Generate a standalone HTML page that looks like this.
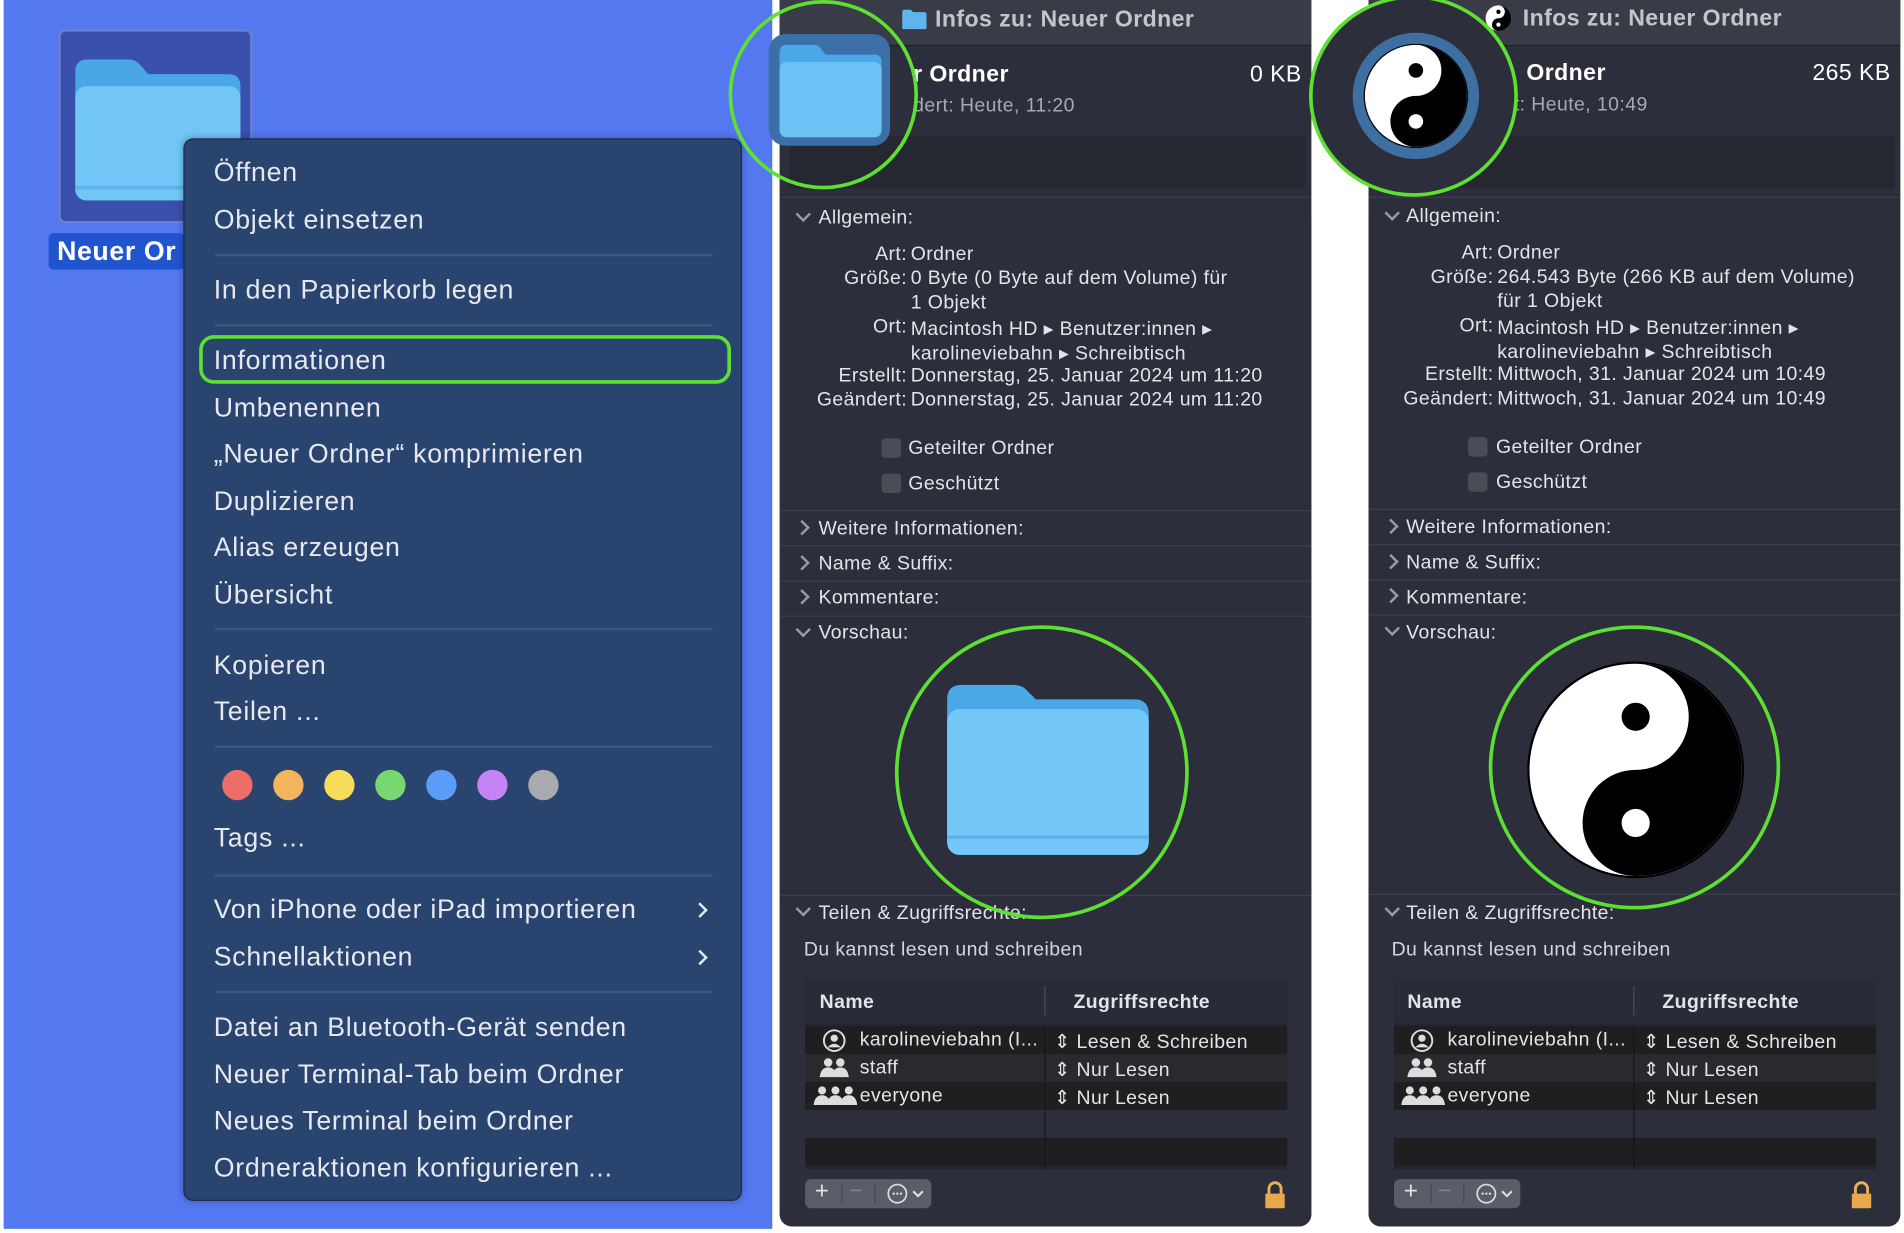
<!DOCTYPE html>
<html><head><meta charset="utf-8">
<style>
html,body{margin:0;padding:0;background:#fff;overflow:hidden;width:1904px;height:1232px}
#s{position:absolute;left:0;top:0;width:1568px;height:1015px;transform:scale(1.2143);transform-origin:0 0;font-family:"Liberation Sans",sans-serif}
.a{position:absolute;white-space:nowrap}
.bg{position:absolute;left:3px;top:0;width:633px;height:1012px;background:#5478f0}
.menu{position:absolute;left:151px;top:114px;width:458px;height:873px;background:#2a4470;border:1px solid #1c2a48;border-radius:8px;box-shadow:0 0 6px rgba(0,0,0,.3)}
.mi{position:absolute;left:24px;color:#e6e8ee;font-size:22px;letter-spacing:0.6px}
.sep{position:absolute;left:25px;width:410px;height:2px;background:#3d5680}
.dot{position:absolute;top:519px;width:25px;height:25px;border-radius:50%}
.panel{position:absolute;top:0;width:438px;height:1010px;background:#2c2f3b;border-radius:0 0 10px 10px;overflow:hidden;color:#e4e4e8;font-size:16px;letter-spacing:0.35px}
.tb{position:absolute;left:0;top:0;width:100%;height:37px;background:#393c47;border-bottom:1px solid #1e2028}
.hl{position:absolute;left:0;width:100%;height:1px;background:#3c3f4b}
.chev{position:absolute;width:7px;height:7px;border-right:2px solid #9a9ca4;border-bottom:2px solid #9a9ca4}
.cd{transform:rotate(45deg)}
.cr{transform:rotate(-45deg)}
.cb{position:absolute;width:16px;height:16px;background:#4a4c56;border-radius:3px}
.lab{position:absolute;right:333px;text-align:right}
.val{position:absolute;left:108px}
.row{position:absolute;left:21px;width:397px;height:23px}
</style></head><body><div id="s">
<div class="bg"></div>
<div class="a" style="left:48px;top:24px;width:160px;height:160px;background:#3a50ad;border:2px solid #6a7fd0;border-radius:6px;box-sizing:border-box"></div>
<svg class="a" style="left:60px;top:45px" width="140" height="125" viewBox="0 0 140 125"><path d="M2 14 Q2 4 12 4 H46 Q52 4 56 9 L62 16 H128 Q138 16 138 26 V110 Q138 120 128 120 H12 Q2 120 2 110Z" fill="#4aa7e6"/><rect x="2" y="26" width="136" height="94" rx="9" fill="#72c6f6"/><rect x="2" y="108" width="136" height="3" fill="#5fb3ea"/></svg>
<div class="a" style="left:40px;top:192px;width:112px;height:30px;background:#2155cf;border-radius:4px"></div>
<div class="a" style="left:47px;top:194px;color:#fff;font-size:22px;font-weight:bold;letter-spacing:0.5px">Neuer Or</div>
<div class="menu">
<div class="mi" style="top:14px">Öffnen</div>
<div class="mi" style="top:53px">Objekt einsetzen</div>
<div class="sep" style="top:94px"></div>
<div class="mi" style="top:111px">In den Papierkorb legen</div>
<div class="sep" style="top:152px"></div>
<div class="a" style="left:12px;top:161px;width:438px;height:40px;border:3px solid #5ee033;border-radius:12px;box-sizing:border-box"></div>
<div class="mi" style="top:169px">Informationen</div>
<div class="mi" style="top:208px">Umbenennen</div>
<div class="mi" style="top:246px">„Neuer Ordner“ komprimieren</div>
<div class="mi" style="top:285px">Duplizieren</div>
<div class="mi" style="top:323px">Alias erzeugen</div>
<div class="mi" style="top:362px">Übersicht</div>
<div class="sep" style="top:402px"></div>
<div class="mi" style="top:420px">Kopieren</div>
<div class="mi" style="top:458px">Teilen ...</div>
<div class="sep" style="top:499px"></div>
<div class="dot" style="left:31px;background:#ec6e66"></div>
<div class="dot" style="left:73px;background:#f2b45c"></div>
<div class="dot" style="left:115px;background:#f7dc5a"></div>
<div class="dot" style="left:157px;background:#77d872"></div>
<div class="dot" style="left:199px;background:#5a9df6"></div>
<div class="dot" style="left:241px;background:#c583f3"></div>
<div class="dot" style="left:283px;background:#a9a9b0"></div>
<div class="mi" style="top:562px">Tags ...</div>
<div class="sep" style="top:605px"></div>
<div class="mi" style="top:621px">Von iPhone oder iPad importieren</div>
<div class="mi" style="top:660px">Schnellaktionen</div>
<div class="chev cr" style="left:420px;top:630px;border-color:#e6e8ee"></div>
<div class="chev cr" style="left:420px;top:669px;border-color:#e6e8ee"></div>
<div class="sep" style="top:701px"></div>
<div class="mi" style="top:718px">Datei an Bluetooth-Gerät senden</div>
<div class="mi" style="top:757px">Neuer Terminal-Tab beim Ordner</div>
<div class="mi" style="top:795px">Neues Terminal beim Ordner</div>
<div class="mi" style="top:834px">Ordneraktionen konfigurieren ...</div>
</div>

<div class="panel" style="left:642px">
<div class="tb"></div>
<svg class="a" style="left:100px;top:7px" width="22" height="18"><path d="M1 3 Q1 1 3 1 H8 L10 3 H19 Q21 3 21 5 V16 Q21 17 20 17 H2 Q1 17 1 16Z" fill="#5db4ef"/></svg>
<div class="a" style="left:128px;top:6px;font-size:19px;font-weight:bold;color:#c4c5ca">Infos zu: Neuer Ordner</div>
<div class="a" style="left:110px;top:51px;font-size:19px;font-weight:bold;color:#fff">r Ordner</div>
<div class="a" style="right:8px;top:51px;font-size:19px;color:#fff">0 KB</div>
<div class="a" style="left:110px;top:79px;color:#a8a9b0">dert: Heute, 11:20</div>
<div class="a" style="left:8px;top:112px;width:425px;height:43px;background:#252731"></div>
<div class="hl" style="top:162px"></div>
<div class="chev cd" style="left:15px;top:172px"></div>
<div class="a" style="left:32px;top:171px">Allgemein:</div>
<div class="lab" style="top:201px">Art:</div><div class="val" style="top:201px">Ordner</div>
<div class="lab" style="top:221px">Größe:</div><div class="val" style="top:221px">0 Byte (0 Byte auf dem Volume) für</div>
<div class="val" style="top:241px">1 Objekt</div>
<div class="lab" style="top:261px">Ort:</div><div class="val" style="top:261px">Macintosh HD ▸ Benutzer:innen ▸</div>
<div class="val" style="top:281px">karolineviebahn ▸ Schreibtisch</div>
<div class="lab" style="top:301px">Erstellt:</div><div class="val" style="top:301px">Donnerstag, 25. Januar 2024 um 11:20</div>
<div class="lab" style="top:321px">Geändert:</div><div class="val" style="top:321px">Donnerstag, 25. Januar 2024 um 11:20</div>
<div class="cb" style="left:84px;top:361px"></div><div class="a" style="left:106px;top:361px">Geteilter Ordner</div>
<div class="cb" style="left:84px;top:390px"></div><div class="a" style="left:106px;top:390px">Geschützt</div>
<div class="hl" style="top:420px"></div>
<div class="chev cr" style="left:14px;top:430px"></div><div class="a" style="left:32px;top:427px">Weitere Informationen:</div>
<div class="hl" style="top:449px"></div>
<div class="chev cr" style="left:14px;top:459px"></div><div class="a" style="left:32px;top:456px">Name &amp; Suffix:</div>
<div class="hl" style="top:478px"></div>
<div class="chev cr" style="left:14px;top:487px"></div><div class="a" style="left:32px;top:484px">Kommentare:</div>
<div class="hl" style="top:507px"></div>
<div class="chev cd" style="left:15px;top:514px"></div><div class="a" style="left:32px;top:513px">Vorschau:</div>
<svg class="a" style="left:134px;top:560px" width="174" height="148" viewBox="0 0 174 148"><path d="M4 16 Q4 4 16 4 H58 Q66 4 70 9 L77 16 H158 Q170 16 170 28 V132 Q170 144 158 144 H16 Q4 144 4 132Z" fill="#4aa8e8"/><rect x="4" y="24" width="166" height="120" rx="10" fill="#74c8f8"/><rect x="4" y="128" width="166" height="3" fill="#5cb2ec"/></svg>
<div class="hl" style="top:737px"></div>
<div class="chev cd" style="left:15px;top:744px"></div><div class="a" style="left:32px;top:744px">Teilen &amp; Zugriffsrechte:</div>
<div class="a" style="left:20px;top:774px;color:#d6d7dc">Du kannst lesen und schreiben</div>
<div class="a" style="left:21px;top:806px;width:397px;height:157px;background:#232530"></div>
<div class="a" style="left:21px;top:806px;width:397px;height:37px;background:#282b38"></div>
<div class="a" style="left:218px;top:812px;width:1px;height:24px;background:#4a4d58"></div>
<div class="a" style="left:33px;top:817px;font-weight:bold">Name</div>
<div class="a" style="left:242px;top:817px;font-weight:bold">Zugriffsrechte</div>
<div class="row" style="top:845px;background:#1f1f22"></div>
<div class="row" style="top:868px;background:#2a2a2e"></div>
<div class="row" style="top:891px;background:#1f1f22"></div>
<div class="row" style="top:914px;background:#2c2f3b"></div>
<div class="row" style="top:937px;background:#1f1f22"></div>
<div class="a" style="left:218px;top:845px;width:1px;height:118px;background:#151518"></div>
<svg class="a" style="left:35px;top:847px" width="20" height="20"><circle cx="10" cy="10" r="8.5" fill="none" stroke="#ddd" stroke-width="1.6"/><circle cx="10" cy="8" r="3" fill="#ddd"/><path d="M4.5 15.5 Q10 9.5 15.5 15.5" fill="#ddd"/></svg>
<svg class="a" style="left:32px;top:870px" width="26" height="18"><circle cx="8" cy="5" r="3.5" fill="#ddd"/><circle cx="18" cy="5" r="3.5" fill="#ddd"/><path d="M1 17 Q2 9 8 9 Q14 9 15 17Z M11 17 Q12 9 18 9 Q24 9 25 17Z" fill="#ddd"/></svg>
<svg class="a" style="left:28px;top:893px" width="36" height="18"><circle cx="7" cy="5" r="3.3" fill="#ddd"/><circle cx="18" cy="5" r="3.3" fill="#ddd"/><circle cx="29" cy="5" r="3.3" fill="#ddd"/><path d="M0 17 Q1 9 7 9 Q13 9 14 17Z M11 17 Q12 9 18 9 Q24 9 25 17Z M22 17 Q23 9 29 9 Q35 9 36 17Z" fill="#ddd"/></svg>
<div class="a" style="left:66px;top:848px">karolineviebahn (I...</div>
<div class="a" style="left:66px;top:871px">staff</div>
<div class="a" style="left:66px;top:894px">everyone</div>
<div class="a" style="left:226px;top:848px">⇕ Lesen &amp; Schreiben</div>
<div class="a" style="left:226px;top:871px">⇕ Nur Lesen</div>
<div class="a" style="left:226px;top:894px">⇕ Nur Lesen</div>
<div class="a" style="left:21px;top:971px;width:104px;height:24px;background:#5a5d68;border-radius:5px"></div>
<div class="a" style="left:29px;top:970px;font-size:20px;color:#e0e0e4">+</div>
<div class="a" style="left:57px;top:970px;font-size:20px;color:#80828a">−</div>
<div class="a" style="left:51px;top:975px;width:1px;height:16px;background:#464850"></div>
<div class="a" style="left:78px;top:975px;width:1px;height:16px;background:#464850"></div>
<svg class="a" style="left:88px;top:974px" width="34" height="18"><circle cx="9" cy="9" r="7.5" fill="none" stroke="#ddd" stroke-width="1.4"/><circle cx="6" cy="9" r="1" fill="#ddd"/><circle cx="9" cy="9" r="1" fill="#ddd"/><circle cx="12" cy="9" r="1" fill="#ddd"/><path d="M22 7 L26 11 L30 7" fill="none" stroke="#ddd" stroke-width="1.8"/></svg>
<svg class="a" style="left:398px;top:972px" width="20" height="24"><path d="M5 11 V7 A5 5 0 0 1 15 7 V11" fill="none" stroke="#e9b25a" stroke-width="2.4"/><rect x="2" y="11" width="16" height="12" rx="1" fill="#e8a84c"/></svg>
</div>
<div class="a" style="left:600px;top:0px;width:156px;height:156px;border:3px solid #5ee033;border-radius:50%;box-sizing:border-box"></div>
<div class="a" style="left:633px;top:28px;width:100px;height:92px;background:#3c6ea8;border-radius:14px"></div>
<svg class="a" style="left:640px;top:35px" width="88" height="80" viewBox="0 0 88 80"><path d="M2 8 Q2 2 8 2 H30 Q34 2 36 5 L40 10 H80 Q86 10 86 16 V72 Q86 78 80 78 H8 Q2 78 2 72Z" fill="#4aa8e8"/><rect x="2" y="16" width="84" height="62" rx="6" fill="#6cc2f4"/></svg>
<div class="a" style="left:737px;top:515px;width:242px;height:242px;border:3px solid #5ee033;border-radius:50%;box-sizing:border-box"></div>

<div class="panel" style="left:1127px">
<div class="tb"></div>
<svg class="a" style="left:96px;top:4px" width="22" height="22" viewBox="-50 -50 100 100"><circle r="48" fill="#fff"/><path d="M0,-48 A48,48 0 0,1 0,48 A24,24 0 0,1 0,0 A24,24 0 0,0 0,-48Z" fill="#000"/><circle cy="-24" r="8" fill="#000"/><circle cy="24" r="8" fill="#fff"/></svg>
<div class="a" style="left:127px;top:5px;font-size:19px;font-weight:bold;color:#c4c5ca">Infos zu: Neuer Ordner</div>
<div class="a" style="left:130px;top:50px;font-size:19px;font-weight:bold;color:#fff">Ordner</div>
<div class="a" style="right:8px;top:50px;font-size:19px;color:#fff">265 KB</div>
<div class="a" style="left:114px;top:78px;color:#a8a9b0">rt: Heute, 10:49</div>
<div class="a" style="left:8px;top:112px;width:425px;height:43px;background:#252731"></div>
<div class="hl" style="top:162px"></div>
<div class="chev cd" style="left:15px;top:171px"></div>
<div class="a" style="left:31px;top:170px">Allgemein:</div>
<div class="lab" style="top:200px;right:335px">Art:</div><div class="val" style="top:200px;left:106px">Ordner</div>
<div class="lab" style="top:220px;right:335px">Größe:</div><div class="val" style="top:220px;left:106px">264.543 Byte (266 KB auf dem Volume)</div>
<div class="val" style="top:240px;left:106px">für 1 Objekt</div>
<div class="lab" style="top:260px;right:335px">Ort:</div><div class="val" style="top:260px;left:106px">Macintosh HD ▸ Benutzer:innen ▸</div>
<div class="val" style="top:280px;left:106px">karolineviebahn ▸ Schreibtisch</div>
<div class="lab" style="top:300px;right:335px">Erstellt:</div><div class="val" style="top:300px;left:106px">Mittwoch, 31. Januar 2024 um 10:49</div>
<div class="lab" style="top:320px;right:335px">Geändert:</div><div class="val" style="top:320px;left:106px">Mittwoch, 31. Januar 2024 um 10:49</div>
<div class="cb" style="left:82px;top:360px"></div><div class="a" style="left:105px;top:360px">Geteilter Ordner</div>
<div class="cb" style="left:82px;top:389px"></div><div class="a" style="left:105px;top:389px">Geschützt</div>
<div class="hl" style="top:419px"></div>
<div class="chev cr" style="left:14px;top:429px"></div><div class="a" style="left:31px;top:426px">Weitere Informationen:</div>
<div class="hl" style="top:448px"></div>
<div class="chev cr" style="left:14px;top:458px"></div><div class="a" style="left:31px;top:455px">Name &amp; Suffix:</div>
<div class="hl" style="top:477px"></div>
<div class="chev cr" style="left:14px;top:486px"></div><div class="a" style="left:31px;top:484px">Kommentare:</div>
<div class="hl" style="top:506px"></div>
<div class="chev cd" style="left:15px;top:513px"></div><div class="a" style="left:31px;top:513px">Vorschau:</div>
<svg class="a" style="left:129px;top:543px" width="182" height="182" viewBox="-51 -51 102 102"><circle r="50" fill="#000"/><circle r="49" fill="#fff"/><path d="M0,-49 A49,49 0 0,1 0,49 A24.5,24.5 0 0,1 0,0 A24.5,24.5 0 0,0 0,-49Z" fill="#000"/><circle cy="-24.5" r="6.5" fill="#000"/><circle cy="24.5" r="6.5" fill="#fff"/></svg>
<div class="hl" style="top:736px"></div>
<div class="chev cd" style="left:15px;top:744px"></div><div class="a" style="left:31px;top:744px">Teilen &amp; Zugriffsrechte:</div>
<div class="a" style="left:19px;top:774px;color:#d6d7dc">Du kannst lesen und schreiben</div>
<div class="a" style="left:21px;top:806px;width:397px;height:157px;background:#232530"></div>
<div class="a" style="left:21px;top:806px;width:397px;height:37px;background:#282b38"></div>
<div class="a" style="left:218px;top:812px;width:1px;height:24px;background:#4a4d58"></div>
<div class="a" style="left:32px;top:817px;font-weight:bold">Name</div>
<div class="a" style="left:242px;top:817px;font-weight:bold">Zugriffsrechte</div>
<div class="row" style="top:845px;background:#1f1f22"></div>
<div class="row" style="top:868px;background:#2a2a2e"></div>
<div class="row" style="top:891px;background:#1f1f22"></div>
<div class="row" style="top:914px;background:#2c2f3b"></div>
<div class="row" style="top:937px;background:#1f1f22"></div>
<div class="a" style="left:218px;top:845px;width:1px;height:118px;background:#151518"></div>
<svg class="a" style="left:34px;top:847px" width="20" height="20"><circle cx="10" cy="10" r="8.5" fill="none" stroke="#ddd" stroke-width="1.6"/><circle cx="10" cy="8" r="3" fill="#ddd"/><path d="M4.5 15.5 Q10 9.5 15.5 15.5" fill="#ddd"/></svg>
<svg class="a" style="left:31px;top:870px" width="26" height="18"><circle cx="8" cy="5" r="3.5" fill="#ddd"/><circle cx="18" cy="5" r="3.5" fill="#ddd"/><path d="M1 17 Q2 9 8 9 Q14 9 15 17Z M11 17 Q12 9 18 9 Q24 9 25 17Z" fill="#ddd"/></svg>
<svg class="a" style="left:27px;top:893px" width="36" height="18"><circle cx="7" cy="5" r="3.3" fill="#ddd"/><circle cx="18" cy="5" r="3.3" fill="#ddd"/><circle cx="29" cy="5" r="3.3" fill="#ddd"/><path d="M0 17 Q1 9 7 9 Q13 9 14 17Z M11 17 Q12 9 18 9 Q24 9 25 17Z M22 17 Q23 9 29 9 Q35 9 36 17Z" fill="#ddd"/></svg>
<div class="a" style="left:65px;top:848px">karolineviebahn (I...</div>
<div class="a" style="left:65px;top:871px">staff</div>
<div class="a" style="left:65px;top:894px">everyone</div>
<div class="a" style="left:226px;top:848px">⇕ Lesen &amp; Schreiben</div>
<div class="a" style="left:226px;top:871px">⇕ Nur Lesen</div>
<div class="a" style="left:226px;top:894px">⇕ Nur Lesen</div>
<div class="a" style="left:21px;top:971px;width:104px;height:24px;background:#5a5d68;border-radius:5px"></div>
<div class="a" style="left:29px;top:970px;font-size:20px;color:#e0e0e4">+</div>
<div class="a" style="left:57px;top:970px;font-size:20px;color:#80828a">−</div>
<div class="a" style="left:51px;top:975px;width:1px;height:16px;background:#464850"></div>
<div class="a" style="left:78px;top:975px;width:1px;height:16px;background:#464850"></div>
<svg class="a" style="left:88px;top:974px" width="34" height="18"><circle cx="9" cy="9" r="7.5" fill="none" stroke="#ddd" stroke-width="1.4"/><circle cx="6" cy="9" r="1" fill="#ddd"/><circle cx="9" cy="9" r="1" fill="#ddd"/><circle cx="12" cy="9" r="1" fill="#ddd"/><path d="M22 7 L26 11 L30 7" fill="none" stroke="#ddd" stroke-width="1.8"/></svg>
<svg class="a" style="left:396px;top:972px" width="20" height="24"><path d="M5 11 V7 A5 5 0 0 1 15 7 V11" fill="none" stroke="#e9b25a" stroke-width="2.4"/><rect x="2" y="11" width="16" height="12" rx="1" fill="#e8a84c"/></svg>
</div>
<div class="a" style="left:1080px;top:0;width:47px;height:180px;background:#fff"></div>
<div class="a" style="left:1078px;top:-4px;width:172px;height:166px;border:3px solid #5ee033;border-radius:50%;box-sizing:border-box;background:#2c2f3b"></div>
<svg class="a" style="left:1113px;top:26px" width="106" height="106" viewBox="-53 -53 106 106"><circle r="52" fill="#3e6fa3"/><circle r="43" fill="#000"/><circle r="42" fill="#fff"/><path d="M0,-42 A42,42 0 0,1 0,42 A21,21 0 0,1 0,0 A21,21 0 0,0 0,-42Z" fill="#000"/><circle cy="-21" r="6" fill="#000"/><circle cy="21" r="6" fill="#fff"/></svg>
<div class="a" style="left:1226px;top:515px;width:240px;height:234px;border:3px solid #5ee033;border-radius:50%;box-sizing:border-box"></div>
</div></body></html>
